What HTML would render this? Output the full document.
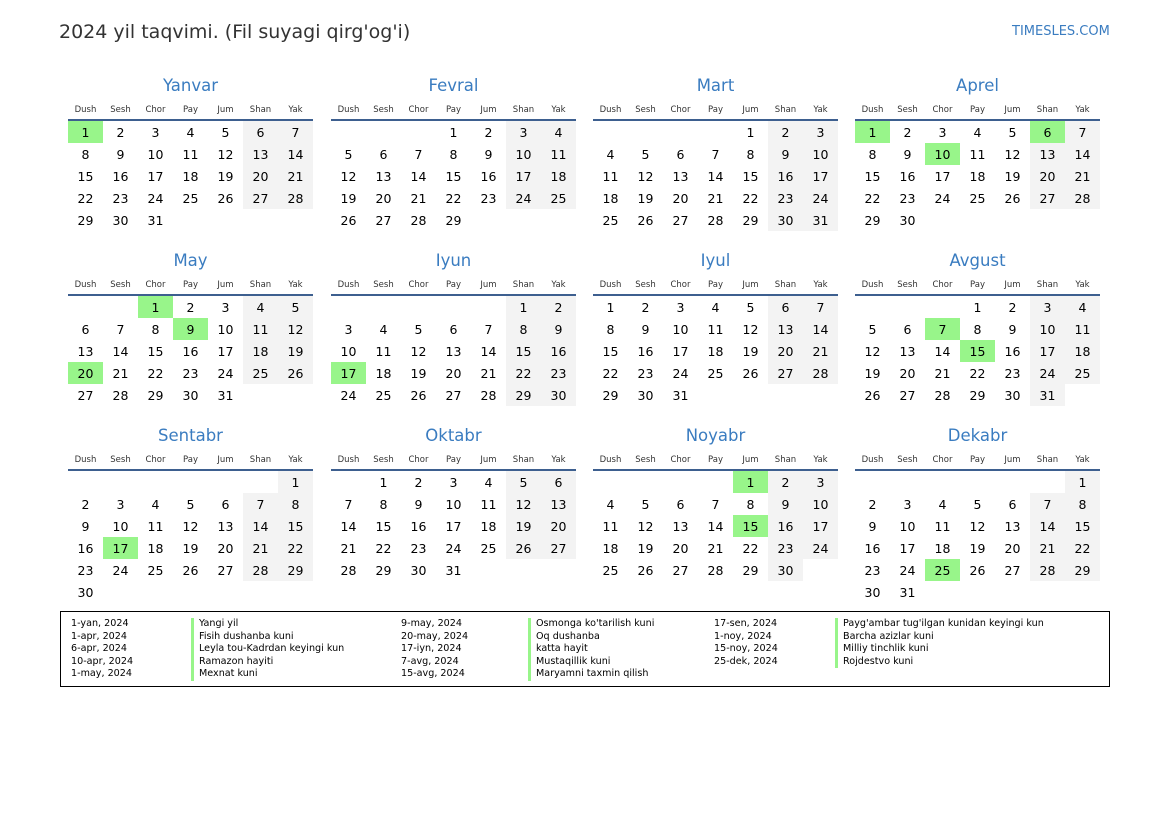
<!DOCTYPE html>
<html><head><meta charset="utf-8"><style>
body{margin:0;width:1169px;height:827px;background:#fff;font-family:"DejaVu Sans","Liberation Sans",sans-serif;position:relative;overflow:hidden}
.t{position:absolute;left:59px;top:21px;font-size:19px;color:#333}
.s{position:absolute;left:1012px;top:24px;font-size:13px;color:#3a7cc0}
.m{position:absolute;width:245px}
.m h2{margin:0;height:24px;font-weight:normal;font-size:16.5px;color:#3a7cc0;text-align:center;line-height:26px}
.m table{border-collapse:collapse;width:245px;table-layout:fixed}
.m th{font-weight:normal;font-size:8.5px;color:#333;height:16px;padding:6px 0 0 0;border-bottom:2px solid #3d5f8f;text-align:center;line-height:14px;vertical-align:top}
.m td{height:22px;padding:0;text-align:center;font-size:12.5px;color:#000}
.m td.w{background:#f3f3f3}
.m td.h{background:#98f58a}
.lg{position:absolute;left:60px;top:611px;width:1048px;height:74px;border:1px solid #000}
.lg div{position:absolute;top:6px;font-size:9.6px;line-height:12.5px;color:#000;white-space:nowrap}
.lg .n{border-left:3px solid #98f58a;padding-left:5px}
</style></head><body>
<div class="t">2024 yil taqvimi. (Fil suyagi qirg'og'i)</div>
<div class="s">TIMESLES.COM</div>

<div class="m" style="left:68px;top:73px"><h2>Yanvar</h2><table><tr><th>Dush</th><th>Sesh</th><th>Chor</th><th>Pay</th><th>Jum</th><th>Shan</th><th>Yak</th></tr>
<tr><td class="h">1</td><td>2</td><td>3</td><td>4</td><td>5</td><td class="w">6</td><td class="w">7</td></tr>
<tr><td>8</td><td>9</td><td>10</td><td>11</td><td>12</td><td class="w">13</td><td class="w">14</td></tr>
<tr><td>15</td><td>16</td><td>17</td><td>18</td><td>19</td><td class="w">20</td><td class="w">21</td></tr>
<tr><td>22</td><td>23</td><td>24</td><td>25</td><td>26</td><td class="w">27</td><td class="w">28</td></tr>
<tr><td>29</td><td>30</td><td>31</td><td></td><td></td><td></td><td></td></tr></table></div>

<div class="m" style="left:331px;top:73px"><h2>Fevral</h2><table><tr><th>Dush</th><th>Sesh</th><th>Chor</th><th>Pay</th><th>Jum</th><th>Shan</th><th>Yak</th></tr>
<tr><td></td><td></td><td></td><td>1</td><td>2</td><td class="w">3</td><td class="w">4</td></tr>
<tr><td>5</td><td>6</td><td>7</td><td>8</td><td>9</td><td class="w">10</td><td class="w">11</td></tr>
<tr><td>12</td><td>13</td><td>14</td><td>15</td><td>16</td><td class="w">17</td><td class="w">18</td></tr>
<tr><td>19</td><td>20</td><td>21</td><td>22</td><td>23</td><td class="w">24</td><td class="w">25</td></tr>
<tr><td>26</td><td>27</td><td>28</td><td>29</td><td></td><td></td><td></td></tr></table></div>

<div class="m" style="left:593px;top:73px"><h2>Mart</h2><table><tr><th>Dush</th><th>Sesh</th><th>Chor</th><th>Pay</th><th>Jum</th><th>Shan</th><th>Yak</th></tr>
<tr><td></td><td></td><td></td><td></td><td>1</td><td class="w">2</td><td class="w">3</td></tr>
<tr><td>4</td><td>5</td><td>6</td><td>7</td><td>8</td><td class="w">9</td><td class="w">10</td></tr>
<tr><td>11</td><td>12</td><td>13</td><td>14</td><td>15</td><td class="w">16</td><td class="w">17</td></tr>
<tr><td>18</td><td>19</td><td>20</td><td>21</td><td>22</td><td class="w">23</td><td class="w">24</td></tr>
<tr><td>25</td><td>26</td><td>27</td><td>28</td><td>29</td><td class="w">30</td><td class="w">31</td></tr></table></div>

<div class="m" style="left:855px;top:73px"><h2>Aprel</h2><table><tr><th>Dush</th><th>Sesh</th><th>Chor</th><th>Pay</th><th>Jum</th><th>Shan</th><th>Yak</th></tr>
<tr><td class="h">1</td><td>2</td><td>3</td><td>4</td><td>5</td><td class="h">6</td><td class="w">7</td></tr>
<tr><td>8</td><td>9</td><td class="h">10</td><td>11</td><td>12</td><td class="w">13</td><td class="w">14</td></tr>
<tr><td>15</td><td>16</td><td>17</td><td>18</td><td>19</td><td class="w">20</td><td class="w">21</td></tr>
<tr><td>22</td><td>23</td><td>24</td><td>25</td><td>26</td><td class="w">27</td><td class="w">28</td></tr>
<tr><td>29</td><td>30</td><td></td><td></td><td></td><td></td><td></td></tr></table></div>

<div class="m" style="left:68px;top:248px"><h2>May</h2><table><tr><th>Dush</th><th>Sesh</th><th>Chor</th><th>Pay</th><th>Jum</th><th>Shan</th><th>Yak</th></tr>
<tr><td></td><td></td><td class="h">1</td><td>2</td><td>3</td><td class="w">4</td><td class="w">5</td></tr>
<tr><td>6</td><td>7</td><td>8</td><td class="h">9</td><td>10</td><td class="w">11</td><td class="w">12</td></tr>
<tr><td>13</td><td>14</td><td>15</td><td>16</td><td>17</td><td class="w">18</td><td class="w">19</td></tr>
<tr><td class="h">20</td><td>21</td><td>22</td><td>23</td><td>24</td><td class="w">25</td><td class="w">26</td></tr>
<tr><td>27</td><td>28</td><td>29</td><td>30</td><td>31</td><td></td><td></td></tr></table></div>

<div class="m" style="left:331px;top:248px"><h2>Iyun</h2><table><tr><th>Dush</th><th>Sesh</th><th>Chor</th><th>Pay</th><th>Jum</th><th>Shan</th><th>Yak</th></tr>
<tr><td></td><td></td><td></td><td></td><td></td><td class="w">1</td><td class="w">2</td></tr>
<tr><td>3</td><td>4</td><td>5</td><td>6</td><td>7</td><td class="w">8</td><td class="w">9</td></tr>
<tr><td>10</td><td>11</td><td>12</td><td>13</td><td>14</td><td class="w">15</td><td class="w">16</td></tr>
<tr><td class="h">17</td><td>18</td><td>19</td><td>20</td><td>21</td><td class="w">22</td><td class="w">23</td></tr>
<tr><td>24</td><td>25</td><td>26</td><td>27</td><td>28</td><td class="w">29</td><td class="w">30</td></tr></table></div>

<div class="m" style="left:593px;top:248px"><h2>Iyul</h2><table><tr><th>Dush</th><th>Sesh</th><th>Chor</th><th>Pay</th><th>Jum</th><th>Shan</th><th>Yak</th></tr>
<tr><td>1</td><td>2</td><td>3</td><td>4</td><td>5</td><td class="w">6</td><td class="w">7</td></tr>
<tr><td>8</td><td>9</td><td>10</td><td>11</td><td>12</td><td class="w">13</td><td class="w">14</td></tr>
<tr><td>15</td><td>16</td><td>17</td><td>18</td><td>19</td><td class="w">20</td><td class="w">21</td></tr>
<tr><td>22</td><td>23</td><td>24</td><td>25</td><td>26</td><td class="w">27</td><td class="w">28</td></tr>
<tr><td>29</td><td>30</td><td>31</td><td></td><td></td><td></td><td></td></tr></table></div>

<div class="m" style="left:855px;top:248px"><h2>Avgust</h2><table><tr><th>Dush</th><th>Sesh</th><th>Chor</th><th>Pay</th><th>Jum</th><th>Shan</th><th>Yak</th></tr>
<tr><td></td><td></td><td></td><td>1</td><td>2</td><td class="w">3</td><td class="w">4</td></tr>
<tr><td>5</td><td>6</td><td class="h">7</td><td>8</td><td>9</td><td class="w">10</td><td class="w">11</td></tr>
<tr><td>12</td><td>13</td><td>14</td><td class="h">15</td><td>16</td><td class="w">17</td><td class="w">18</td></tr>
<tr><td>19</td><td>20</td><td>21</td><td>22</td><td>23</td><td class="w">24</td><td class="w">25</td></tr>
<tr><td>26</td><td>27</td><td>28</td><td>29</td><td>30</td><td class="w">31</td><td></td></tr></table></div>

<div class="m" style="left:68px;top:423px"><h2>Sentabr</h2><table><tr><th>Dush</th><th>Sesh</th><th>Chor</th><th>Pay</th><th>Jum</th><th>Shan</th><th>Yak</th></tr>
<tr><td></td><td></td><td></td><td></td><td></td><td></td><td class="w">1</td></tr>
<tr><td>2</td><td>3</td><td>4</td><td>5</td><td>6</td><td class="w">7</td><td class="w">8</td></tr>
<tr><td>9</td><td>10</td><td>11</td><td>12</td><td>13</td><td class="w">14</td><td class="w">15</td></tr>
<tr><td>16</td><td class="h">17</td><td>18</td><td>19</td><td>20</td><td class="w">21</td><td class="w">22</td></tr>
<tr><td>23</td><td>24</td><td>25</td><td>26</td><td>27</td><td class="w">28</td><td class="w">29</td></tr>
<tr><td>30</td><td></td><td></td><td></td><td></td><td></td><td></td></tr></table></div>

<div class="m" style="left:331px;top:423px"><h2>Oktabr</h2><table><tr><th>Dush</th><th>Sesh</th><th>Chor</th><th>Pay</th><th>Jum</th><th>Shan</th><th>Yak</th></tr>
<tr><td></td><td>1</td><td>2</td><td>3</td><td>4</td><td class="w">5</td><td class="w">6</td></tr>
<tr><td>7</td><td>8</td><td>9</td><td>10</td><td>11</td><td class="w">12</td><td class="w">13</td></tr>
<tr><td>14</td><td>15</td><td>16</td><td>17</td><td>18</td><td class="w">19</td><td class="w">20</td></tr>
<tr><td>21</td><td>22</td><td>23</td><td>24</td><td>25</td><td class="w">26</td><td class="w">27</td></tr>
<tr><td>28</td><td>29</td><td>30</td><td>31</td><td></td><td></td><td></td></tr></table></div>

<div class="m" style="left:593px;top:423px"><h2>Noyabr</h2><table><tr><th>Dush</th><th>Sesh</th><th>Chor</th><th>Pay</th><th>Jum</th><th>Shan</th><th>Yak</th></tr>
<tr><td></td><td></td><td></td><td></td><td class="h">1</td><td class="w">2</td><td class="w">3</td></tr>
<tr><td>4</td><td>5</td><td>6</td><td>7</td><td>8</td><td class="w">9</td><td class="w">10</td></tr>
<tr><td>11</td><td>12</td><td>13</td><td>14</td><td class="h">15</td><td class="w">16</td><td class="w">17</td></tr>
<tr><td>18</td><td>19</td><td>20</td><td>21</td><td>22</td><td class="w">23</td><td class="w">24</td></tr>
<tr><td>25</td><td>26</td><td>27</td><td>28</td><td>29</td><td class="w">30</td><td></td></tr></table></div>

<div class="m" style="left:855px;top:423px"><h2>Dekabr</h2><table><tr><th>Dush</th><th>Sesh</th><th>Chor</th><th>Pay</th><th>Jum</th><th>Shan</th><th>Yak</th></tr>
<tr><td></td><td></td><td></td><td></td><td></td><td></td><td class="w">1</td></tr>
<tr><td>2</td><td>3</td><td>4</td><td>5</td><td>6</td><td class="w">7</td><td class="w">8</td></tr>
<tr><td>9</td><td>10</td><td>11</td><td>12</td><td>13</td><td class="w">14</td><td class="w">15</td></tr>
<tr><td>16</td><td>17</td><td>18</td><td>19</td><td>20</td><td class="w">21</td><td class="w">22</td></tr>
<tr><td>23</td><td>24</td><td class="h">25</td><td>26</td><td>27</td><td class="w">28</td><td class="w">29</td></tr>
<tr><td>30</td><td>31</td><td></td><td></td><td></td><td></td><td></td></tr></table></div>

<div class="lg">
<div style="left:10px">1-yan, 2024<br>1-apr, 2024<br>6-apr, 2024<br>10-apr, 2024<br>1-may, 2024</div>
<div class="n" style="left:130px">Yangi yil<br>Fisih dushanba kuni<br>Leyla tou-Kadrdan keyingi kun<br>Ramazon hayiti<br>Mexnat kuni</div>
<div style="left:340px">9-may, 2024<br>20-may, 2024<br>17-iyn, 2024<br>7-avg, 2024<br>15-avg, 2024</div>
<div class="n" style="left:467px">Osmonga ko'tarilish kuni<br>Oq dushanba<br>katta hayit<br>Mustaqillik kuni<br>Maryamni taxmin qilish</div>
<div style="left:653px">17-sen, 2024<br>1-noy, 2024<br>15-noy, 2024<br>25-dek, 2024</div>
<div class="n" style="left:774px">Payg'ambar tug'ilgan kunidan keyingi kun<br>Barcha azizlar kuni<br>Milliy tinchlik kuni<br>Rojdestvo kuni</div>
</div>
</body></html>
